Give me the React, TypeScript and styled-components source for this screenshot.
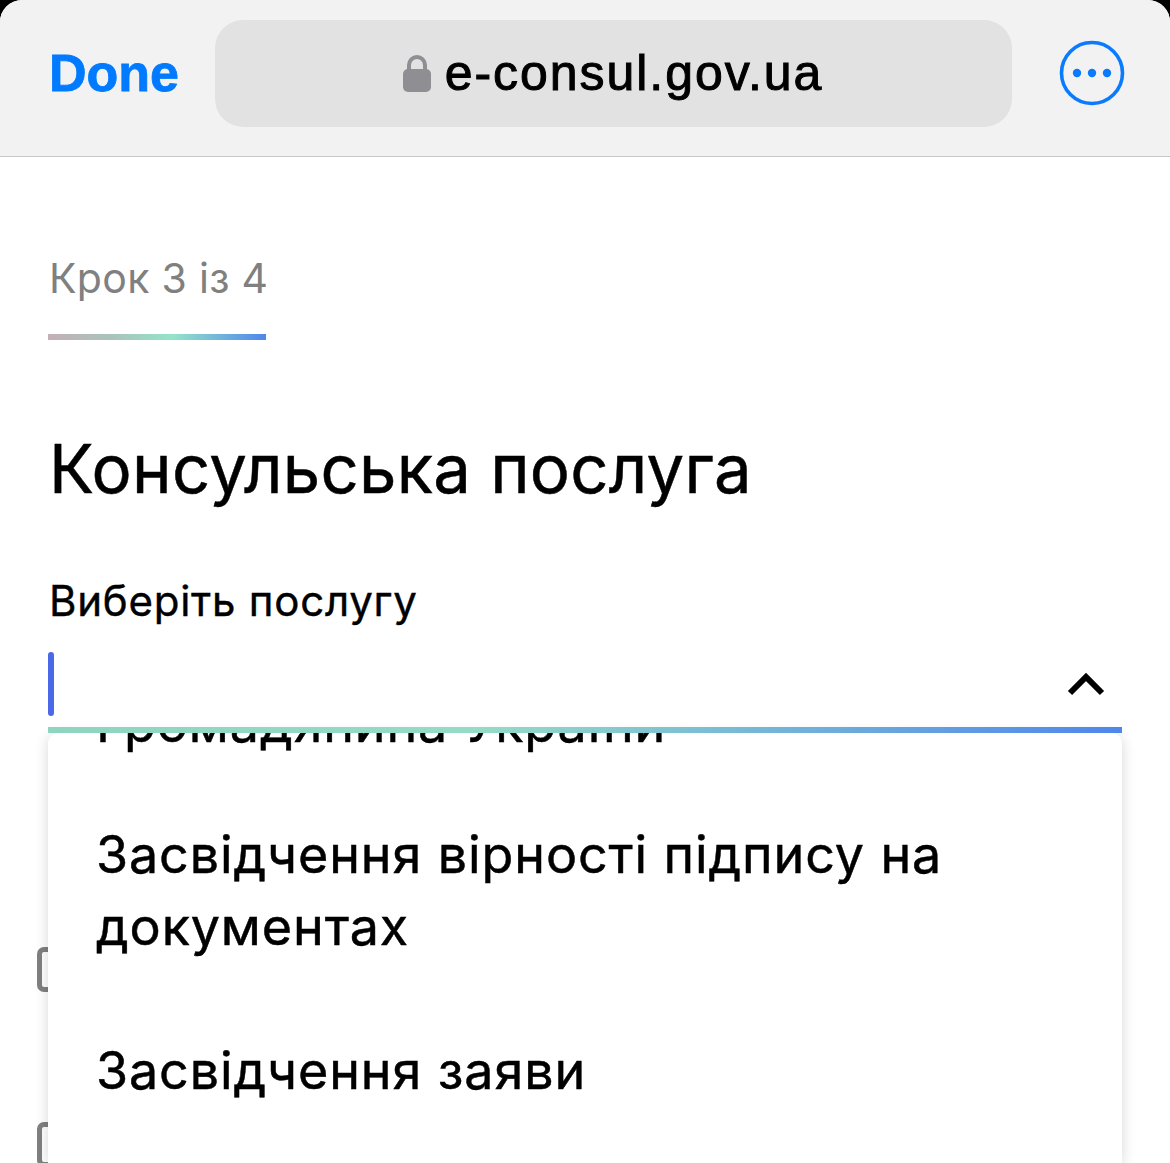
import React from "react";
import styled, { createGlobalStyle } from "styled-components";

const Global = createGlobalStyle`
  html, body { margin: 0; padding: 0; height: 1163px; overflow: hidden; background: #000; }
  #root { height: 1163px; }
`;

const Page = styled.div`
  height: 1163px;
  overflow: hidden;
  background: #fff;
  border-radius: 22px 22px 0 0;
  font-family: Inter, "Noto Sans", sans-serif;
  color: #000;
`;

const BrowserBar = styled.header`
  height: 156px;
  box-sizing: content-box;
  border-bottom: 1px solid #c8c8c8;
  background: #f2f2f2;
  display: flex;
  align-items: center;
  padding: 0 0 0 49px;
  font-family: "Liberation Sans", Arial, sans-serif;
`;

const DoneButton = styled.div`
  width: 166px;
  flex: none;
  font-size: 52px;
  font-weight: 700;
  color: #007aff;
  line-height: 1;
  margin-top: -10px;
  -webkit-text-stroke: 0.8px #007aff;
`;

const AddressPill = styled.div`
  width: 797px;
  flex: none;
  height: 107px;
  margin-top: -10px;
  border-radius: 28px;
  background: #e2e2e2;
  display: flex;
  align-items: center;
  justify-content: center;
  gap: 13px;
  font-size: 50px;
  letter-spacing: 1.95px;
  font-weight: 400;
  -webkit-text-stroke: 1px #000;
  box-sizing: border-box;
  padding-right: 2px;
`;

const MoreButton = styled.svg`
  width: 66px;
  height: 66px;
  margin-left: 47px;
  margin-top: -10px;
  flex: none;
`;

const Content = styled.main`
  position: relative;
  padding: 96px 48px 0;
`;

const StepLabel = styled.div`
  font-size: 41px;
  letter-spacing: 0.3px;
  line-height: 50px;
  color: #808080;
  padding-left: 1px;
`;

const StepBar = styled.div`
  width: 218px;
  height: 6px;
  margin-top: 31px;
  background: linear-gradient(90deg, #c4afb8 0%, #a9c4bb 30%, #94e4c9 57%, #4f86ec 100%);
`;

const Title = styled.h1`
  margin: 89px 0 0 1px;
  font-size: 67px;
  letter-spacing: 0.25px;
  line-height: 80px;
  font-weight: 400;
  -webkit-text-stroke: 0.5px #000;
`;

const FieldLabel = styled.div`
  margin: 66px 0 0 1px;
  font-size: 42px;
  letter-spacing: 0.75px;
  line-height: 52px;
  -webkit-text-stroke: 0.4px #000;
`;

const SelectField = styled.div`
  position: relative;
  height: 81px;
  margin-top: 25px;
  display: flex;
  justify-content: space-between;
  align-items: flex-start;
`;

const Caret = styled.div`
  width: 6px;
  height: 64px;
  border-radius: 3px;
  background: #4a68e8;
`;

const Chevron = styled.svg`
  width: 40px;
  height: 28px;
  margin: 18px 16px 0 0;
`;

const SelectLine = styled.div`
  position: absolute;
  z-index: 3;
  left: 0;
  right: 0;
  bottom: 0;
  height: 6px;
  background: linear-gradient(90deg, #8fd4bf 0%, #94dcc6 40%, #4f86ec 100%);
`;

const OptionsMenu = styled.div`
  position: absolute;
  z-index: 2;
  left: 48px;
  right: 48px;
  top: 576px;
  height: 430px;
  overflow: hidden;
  background: #fff;
  border-radius: 10px 10px 0 0;
  box-shadow: 0 2px 14px rgba(0, 0, 0, 0.16);
`;

const OptionsList = styled.div`
  margin-top: -45px;
  padding: 0 48px;
`;

const Option = styled.div<{ $gap: number }>`
  font-size: 52px;
  letter-spacing: 0.9px;
  line-height: 72px;
  margin-bottom: ${(p) => p.$gap}px;
  -webkit-text-stroke: 0.5px #000;
`;

const CheckboxStub = styled.div<{ $top: number }>`
  position: absolute;
  left: 37px;
  top: ${(p) => p.$top}px;
  width: 44px;
  height: 45px;
  box-sizing: border-box;
  border: 5px solid #808080;
  border-radius: 7px;
`;

export default function App() {
  return (
    <Page>
      <Global />
      <BrowserBar>
        <DoneButton>Done</DoneButton>
        <AddressPill>
          <svg width="30" height="38" viewBox="0 0 30 38" aria-hidden="true">
            <path d="M7 17V11a8 8 0 0 1 16 0v6" fill="none" stroke="#8e8e93" strokeWidth="4" />
            <rect x="1" y="15" width="28" height="23" rx="5" fill="#8e8e93" />
          </svg>
          <span>e-consul.gov.ua</span>
        </AddressPill>
        <MoreButton viewBox="0 0 66 66" aria-hidden="true">
          <circle cx="33" cy="33" r="30.5" fill="none" stroke="#0a7aff" strokeWidth="3.6" />
          <circle cx="18" cy="33" r="4.2" fill="#0a7aff" />
          <circle cx="33" cy="33" r="4.2" fill="#0a7aff" />
          <circle cx="48" cy="33" r="4.2" fill="#0a7aff" />
        </MoreButton>
      </BrowserBar>
      <Content>
        <StepLabel>Крок 3 із 4</StepLabel>
        <StepBar />
        <Title>Консульська послуга</Title>
        <FieldLabel>Виберіть послугу</FieldLabel>
        <SelectField>
          <Caret />
          <Chevron viewBox="0 0 40 28" aria-hidden="true">
            <path d="M4 23 L20 7 L36 23" fill="none" stroke="#000" strokeWidth="6" />
          </Chevron>
          <SelectLine />
        </SelectField>
        <CheckboxStub $top={790} />
        <CheckboxStub $top={965} />
        <OptionsMenu>
          <OptionsList>
            <Option $gap={59}>Громадянина України</Option>
            <Option $gap={72}>
              Засвідчення вірності підпису на
              <br />
              документах
            </Option>
            <Option $gap={42}>Засвідчення заяви</Option>
            <Option $gap={0}>Засвідчення справжності</Option>
          </OptionsList>
        </OptionsMenu>
      </Content>
    </Page>
  );
}
